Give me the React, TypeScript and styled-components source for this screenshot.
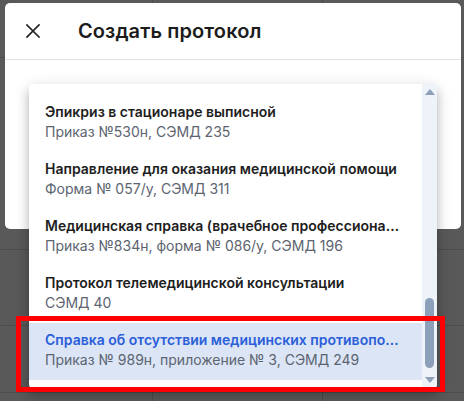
import styled, { createGlobalStyle } from 'styled-components'

const GlobalStyle = createGlobalStyle`
  html, body {
    margin: 0;
    padding: 0;
  }

  body {
    font-family: Inter, "Noto Sans", sans-serif;
    color: #1f1f1f;
  }
`

type Protocol = {
  title: string
  note: string
}

const protocols: Protocol[] = [
  { title: 'Эпикриз в стационаре выписной', note: 'Приказ №530н, СЭМД 235' },
  { title: 'Направление для оказания медицинской помощи', note: 'Форма № 057/у, СЭМД 311' },
  {
    title: 'Медицинская справка (врачебное профессиональное консультативное заключение)',
    note: 'Приказ №834н, форма № 086/у, СЭМД 196',
  },
  { title: 'Протокол телемедицинской консультации', note: 'СЭМД 40' },
  {
    title: 'Справка об отсутствии медицинских противопоказаний',
    note: 'Приказ № 989н, приложение № 3, СЭМД 249',
  },
]

const SELECTED = 4

// dimmed table that sits under the dialog
const Page = styled.div`
  position: relative;
  width: 464px;
  height: 401px;
  overflow: hidden;
  background-color: #595959;
  background-image:
    linear-gradient(to right, transparent 152px, #4a4a4a 152px, #4a4a4a 153px, transparent 153px),
    linear-gradient(to right, transparent 322px, #4a4a4a 322px, #4a4a4a 323px, transparent 323px),
    linear-gradient(to bottom, transparent 57px, #4d4d4d 57px, #4d4d4d 58px, transparent 58px),
    linear-gradient(to bottom, transparent 249px, #4d4d4d 249px, #4d4d4d 250px, transparent 250px),
    linear-gradient(to bottom, transparent 325px, #4d4d4d 325px, #4d4d4d 326px, transparent 326px),
    linear-gradient(to bottom, transparent 392px, #4d4d4d 392px, #4d4d4d 393px, transparent 393px);
  padding: 3px 3px 0 5px;
  box-sizing: border-box;
`

const Dialog = styled.div`
  width: 456px;
  height: 226px;
  background: #ffffff;
  border-radius: 5px;
  display: flex;
  flex-direction: column;
`

const DialogHeader = styled.div`
  height: 56px;
  display: flex;
  align-items: center;
  gap: 33px;
  padding: 0 0 0 16px;
  border-bottom: 1px solid #e2e2e2;
  flex-shrink: 0;
`

const CloseButton = styled.button`
  width: 24px;
  height: 24px;
  padding: 0;
  border: none;
  background: none;
  display: flex;
  align-items: center;
  justify-content: center;
  color: #222222;
  cursor: pointer;
`

const Title = styled.h2`
  margin: 0;
  font-size: 20px;
  font-weight: 600;
  letter-spacing: 0.1px;
  color: #1c1c1c;
`

const DialogBody = styled.div`
  padding: 23px 24px 0 24px;
`

const Field = styled.div`
  position: relative;
  width: 406px;
  height: 56px;
`

const Outline = styled.fieldset`
  position: absolute;
  inset: 0;
  margin: 0;
  padding: 0 8px;
  border: 1.5px solid #2a56c6;
  border-radius: 4px;

  legend {
    padding: 0 4px;
    font-size: 12px;
    line-height: 1;
    color: #2a56c6;
  }
`

const Popover = styled.div`
  position: absolute;
  top: 1px;
  left: 0;
  width: 408px;
  height: 304px;
  background: #ffffff;
  border-radius: 4px;
  box-shadow:
    0 5px 5px -3px rgba(0, 0, 0, 0.2),
    0 8px 10px 1px rgba(0, 0, 0, 0.14),
    0 3px 14px 2px rgba(0, 0, 0, 0.12);
  display: flex;
  overflow: hidden;
`

const List = styled.ul`
  flex: 1;
  min-width: 0;
  margin: 0;
  padding: 11px 0 8px;
  list-style: none;
`

const Option = styled.li<{ $selected?: boolean }>`
  height: 57px;
  box-sizing: border-box;
  padding: 7px 16px 10px;
  background: ${(p) => (p.$selected ? '#dbe5f6' : 'transparent')};
  cursor: pointer;
`

const OptionTitle = styled.div<{ $selected?: boolean }>`
  font-size: 14px;
  line-height: 20px;
  font-weight: 600;
  color: ${(p) => (p.$selected ? '#2b5fd9' : '#1e1e1e')};
  white-space: nowrap;
  overflow: hidden;
  text-overflow: ellipsis;
`

const OptionNote = styled.div`
  font-size: 14px;
  line-height: 20px;
  color: #5c6470;
  white-space: nowrap;
  overflow: hidden;
  text-overflow: ellipsis;
`

const ScrollTrack = styled.div`
  width: 15px;
  background: #eef2f9;
  display: flex;
  flex-direction: column;
  align-items: center;
`

const ScrollArrow = styled.div`
  height: 16px;
  display: flex;
  align-items: center;
  justify-content: center;
  color: #8da0bb;
`

const ThumbRail = styled.div`
  flex: 1;
  display: flex;
  flex-direction: column;
  justify-content: flex-end;
  padding-bottom: 4px;
`

const Thumb = styled.div`
  width: 9px;
  background: #8da0bb;
  border-radius: 5px;
`

const Highlight = styled.div`
  position: absolute;
  left: 16px;
  top: 316px;
  width: 429px;
  height: 76px;
  box-sizing: border-box;
  border: 5px solid #ff0000;
  pointer-events: none;
`

function CloseIcon() {
  return (
    <svg width="16" height="16" viewBox="0 0 16 16" fill="none">
      <path d="M2 2L14 14M14 2L2 14" stroke="currentColor" strokeWidth="1.7" strokeLinecap="square" />
    </svg>
  )
}

function Arrow({ down }: { down?: boolean }) {
  return (
    <svg width="10" height="6" viewBox="0 0 10 6">
      <path d={down ? 'M0 0H10L5 6Z' : 'M0 6H10L5 0Z'} fill="currentColor" />
    </svg>
  )
}

export default function App() {
  const thumbHeight = 70

  return (
    <>
      <GlobalStyle />
      <Page>
        <Dialog>
          <DialogHeader>
            <CloseButton aria-label="Закрыть">
              <CloseIcon />
            </CloseButton>
            <Title>Создать протокол</Title>
          </DialogHeader>
          <DialogBody>
            <Field>
              <Outline>
                <legend>Тип протокола</legend>
              </Outline>
              <Popover>
                <List>
                  {protocols.map((p, i) => (
                    <Option key={p.title} $selected={i === SELECTED}>
                      <OptionTitle $selected={i === SELECTED}>{p.title}</OptionTitle>
                      <OptionNote>{p.note}</OptionNote>
                    </Option>
                  ))}
                </List>
                <ScrollTrack>
                  <ScrollArrow>
                    <Arrow />
                  </ScrollArrow>
                  <ThumbRail>
                    <Thumb style={{ height: thumbHeight }} />
                  </ThumbRail>
                  <ScrollArrow>
                    <Arrow down />
                  </ScrollArrow>
                </ScrollTrack>
              </Popover>
            </Field>
          </DialogBody>
        </Dialog>
        <Highlight />
      </Page>
    </>
  )
}
